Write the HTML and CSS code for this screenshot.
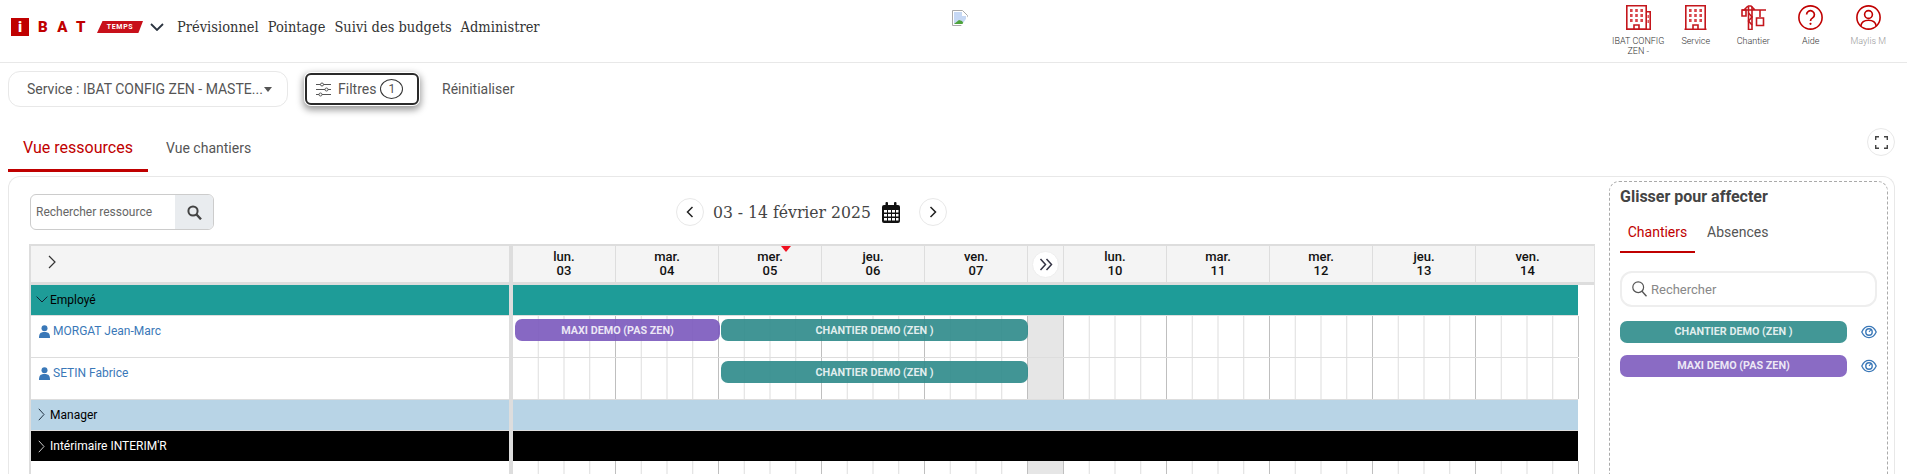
FILE: index.html
```html
<!DOCTYPE html>
<html lang="fr">
<head>
<meta charset="utf-8">
<title>IBAT Temps</title>
<link rel="stylesheet" href="styles.css">
</head>
<body>
<header class="topbar">
  <div class="brand">
    <span class="brand-i">i</span>
    <span class="brand-name">BAT</span>
    <span class="brand-temps">TEMPS</span>
    <svg class="brand-chev" viewBox="0 0 14 8"><path d="M1 1l6 6 6-6" fill="none" stroke="#2b3440" stroke-width="1.8"/></svg>
  </div>
  <nav class="mainnav">
    <a>Prévisionnel</a><a>Pointage</a><a>Suivi des budgets</a><a>Administrer</a>
  </nav>
  <div class="broken">
    <svg width="16" height="16" viewBox="0 0 16 16">
      <path d="M.5.5h10l5 5v10H.5z" fill="#fff" stroke="#a9a9a9"/>
      <path d="M2 2h8v4h4v8H2z" fill="#c6d8f4"/>
      <path d="M2 14l5-4 3 1 2 3z" fill="#4ea33c"/>
      <path d="M16 6L9 16h7z" fill="#fff"/>
    </svg>
  </div>
  <div class="tools">
    <div class="tool">
      <svg class="tool-ico" viewBox="0 0 25 25"><g fill="none" stroke="#c4161c" stroke-width="1.6"><path d="M.8 24.2V.8h19.4v23.4z"/><path d="M20.2 6.8h4v17.4h-4M.5 24.2h24"/><path d="M8 24v-4h5v4"/></g><g fill="#d9464b"><rect x="4" y="4" width="2.6" height="3"/><rect x="9.2" y="4" width="2.6" height="3"/><rect x="14.4" y="4" width="2.6" height="3"/><rect x="4" y="9" width="2.6" height="3"/><rect x="9.2" y="9" width="2.6" height="3"/><rect x="14.4" y="9" width="2.6" height="3"/><rect x="4" y="14" width="2.6" height="3"/><rect x="9.2" y="14" width="2.6" height="3"/><rect x="14.4" y="14" width="2.6" height="3"/><rect x="21.5" y="10" width="1.4" height="3"/><rect x="21.5" y="15" width="1.4" height="3"/></g></svg>
      <span>IBAT CONFIG ZEN -</span>
    </div>
    <div class="tool">
      <svg class="tool-ico" viewBox="0 0 25 25"><g fill="none" stroke="#c4161c" stroke-width="1.6"><path d="M2.8 24.2V.8h19.4v23.4zM1.5 24.2h22"/><path d="M10 24v-4h5v4"/></g><g fill="#d9464b"><rect x="6" y="4" width="2.6" height="3"/><rect x="11.2" y="4" width="2.6" height="3"/><rect x="16.4" y="4" width="2.6" height="3"/><rect x="6" y="9" width="2.6" height="3"/><rect x="11.2" y="9" width="2.6" height="3"/><rect x="16.4" y="9" width="2.6" height="3"/><rect x="6" y="14" width="2.6" height="3"/><rect x="11.2" y="14" width="2.6" height="3"/><rect x="16.4" y="14" width="2.6" height="3"/></g></svg>
      <span>Service</span>
    </div>
    <div class="tool">
      <svg class="tool-ico" viewBox="0 0 25 25"><g fill="none" stroke="#c4161c" stroke-width="1.6"><path d="M1 5h24M7 1l-4 4M7 1h3l4 4"/><path d="M1 5h4v6H1z"/><path d="M7.5 1.5V24.5h3.5V1.5"/><path d="M7.5 8l3.5 4-3.5 4 3.5 4"/><path d="M19 5v7"/><path d="M15.5 13h7v7.5h-7z"/></g></svg>
      <span>Chantier</span>
    </div>
    <div class="tool">
      <svg class="tool-ico" viewBox="0 0 25 25"><circle cx="12.5" cy="12.5" r="11.6" fill="none" stroke="#c00000" stroke-width="1.6"/><path d="M8.6 9.6a3.9 3.9 0 1 1 6 3.3c-1.4.9-2.1 1.5-2.1 3" fill="none" stroke="#c00000" stroke-width="1.7"/><circle cx="12.5" cy="18.8" r="1.1" fill="#c00000"/></svg>
      <span>Aide</span>
    </div>
    <div class="tool tool-user">
      <svg class="tool-ico" viewBox="0 0 25 25"><g fill="none" stroke="#c00000" stroke-width="1.6"><circle cx="12.5" cy="12.5" r="11.6"/><circle cx="12.5" cy="9.5" r="3.9"/><path d="M4.8 21c.7-3.8 3.6-5.7 7.7-5.7s7 1.9 7.7 5.7"/></g></svg>
      <span>Maylis M</span>
    </div>
  </div>
</header>

<section class="filterbar">
  <div class="select">
    <span class="select-text">Service : IBAT CONFIG ZEN - MASTE...</span>
    <span class="caret"></span>
  </div>
  <button class="filter-btn">
    <svg width="15" height="15" viewBox="0 0 15 15"><g fill="none" stroke="#555" stroke-width="1"><path d="M0 2.5h4.5M7.5 2.500h7.500M0 7.500h9M12 7.500h3M0 12.500h3M6 12.500h9"/><circle cx="6" cy="2.500" r="1.500"/><circle cx="10.500" cy="7.500" r="1.500"/><circle cx="4.500" cy="12.500" r="1.500"/></g></svg>
    <span>Filtres</span>
    <span class="filter-count">1</span>
  </button>
  <a class="reset">Réinitialiser</a>
</section>

<section class="viewtabs">
  <div class="tabs">
    <a class="tab tab-active">Vue ressources</a>
    <a class="tab">Vue chantiers</a>
  </div>
  <button class="fullscreen">
    <svg width="13" height="13" viewBox="0 0 13 13"><path d="M.7 4V.7H4M9 .7h3.300V4M12.300 9v3.300H9M4 12.300H.7V9" fill="none" stroke="#444" stroke-width="1.400"/></svg>
  </button>
</section>

<main class="card">
  <div class="planning">
    <div class="toolbar">
      <div class="search">
        <span class="search-input">Rechercher ressource</span>
        <span class="search-btn">
          <svg width="15" height="15" viewBox="0 0 15 15"><circle cx="6" cy="6" r="4.600" fill="none" stroke="#444" stroke-width="2"/><path d="M9.500 9.500l4.500 4.800" stroke="#444" stroke-width="2.400"/></svg>
        </span>
      </div>
      <div class="datenav">
        <button class="round"><svg width="8" height="12" viewBox="0 0 8 12"><path d="M6.500 1L1.500 6l5 5" fill="none" stroke="#222" stroke-width="1.500"/></svg></button>
        <span class="daterange">03 - 14 février 2025</span>
        <svg class="calendar" width="18" height="21" viewBox="0 0 18 21"><path d="M2 3h14a2 2 0 0 1 2 2v14a2 2 0 0 1-2 2H2a2 2 0 0 1-2-2V5a2 2 0 0 1 2-2z" fill="#111"/><rect x="3.500" y="0" width="2.500" height="5" rx="1" fill="#111"/><rect x="12" y="0" width="2.500" height="5" rx="1" fill="#111"/><g fill="#fff"><rect x="2" y="8" width="3" height="2.500"/><rect x="6" y="8" width="3" height="2.500"/><rect x="10" y="8" width="3" height="2.500"/><rect x="14" y="8" width="2.500" height="2.500"/><rect x="2" y="12" width="3" height="2.500"/><rect x="6" y="12" width="3" height="2.500"/><rect x="10" y="12" width="3" height="2.500"/><rect x="14" y="12" width="2.500" height="2.500"/><rect x="2" y="16" width="3" height="2.500"/><rect x="6" y="16" width="3" height="2.500"/><rect x="10" y="16" width="3" height="2.500"/><rect x="14" y="16" width="2.500" height="2.500"/></g></svg>
        <button class="round"><svg width="8" height="12" viewBox="0 0 8 12"><path d="M1.500 1l5 5-5 5" fill="none" stroke="#222" stroke-width="1.500"/></svg></button>
      </div>
      <div></div>
    </div>

    <div class="gantt">
      <div class="row row-head">
        <div class="label head-label"><svg width="8" height="14" viewBox="0 0 8 14"><path d="M1 1l6 6-6 6" fill="none" stroke="#333" stroke-width="1.200"/></svg></div>
        <div class="track head-track">
          <div class="day">lun.<br>03</div>
          <div class="day">mar.<br>04</div>
          <div class="day day-today">mer.<br>05</div>
          <div class="day">jeu.<br>06</div>
          <div class="day">ven.<br>07</div>
          <div class="day day-skip"><button class="skip"><svg width="14" height="13" viewBox="0 0 14 13"><path d="M1.500 1l5 5.500-5 5.500M7.500 1l5 5.500-5 5.500" fill="none" stroke="#334" stroke-width="1.500"/></svg></button></div>
          <div class="day">lun.<br>10</div>
          <div class="day">mar.<br>11</div>
          <div class="day">mer.<br>12</div>
          <div class="day">jeu.<br>13</div>
          <div class="day">ven.<br>14</div>
        </div>
      </div>

      <div class="row row-group group-teal">
        <div class="label"><svg class="chev-down" width="12" height="7" viewBox="0 0 12 7"><path d="M.6.600L6 6l5.400-5.400" fill="none" stroke="#123" stroke-width="1"/></svg><span>Employé</span></div>
        <div class="track-fill"></div>
      </div>

      <div class="row row-res">
        <div class="label res-label">
          <svg width="11" height="13" viewBox="0 0 11 13"><circle cx="5.500" cy="3.200" r="3" fill="#3a78b8"/><path d="M0 13c0-4 1-6 5.500-6S11 9 11 13z" fill="#3a78b8"/></svg>
          <span>MORGAT Jean-Marc</span>
        </div>
        <div class="track grid-track">
          <div class="week week-a"></div><div class="weekend"></div><div class="week week-b"></div>
          <div class="bar bar-purple bar-1">MAXI DEMO (PAS ZEN)</div>
          <div class="bar bar-teal bar-2">CHANTIER DEMO (ZEN )</div>
        </div>
      </div>

      <div class="row row-res">
        <div class="label res-label">
          <svg width="11" height="13" viewBox="0 0 11 13"><circle cx="5.500" cy="3.200" r="3" fill="#3a78b8"/><path d="M0 13c0-4 1-6 5.500-6S11 9 11 13z" fill="#3a78b8"/></svg>
          <span>SETIN Fabrice</span>
        </div>
        <div class="track grid-track">
          <div class="week week-a"></div><div class="weekend"></div><div class="week week-b"></div>
          <div class="bar bar-teal bar-2">CHANTIER DEMO (ZEN )</div>
        </div>
      </div>

      <div class="row row-group group-blue">
        <div class="label"><svg class="chev-right" width="7" height="13" viewBox="0 0 7 13"><path d="M.8.800L6 6.500.8 12.200" fill="none" stroke="#234" stroke-width="1"/></svg><span>Manager</span></div>
        <div class="track-fill"></div>
      </div>

      <div class="row row-group group-black">
        <div class="label"><svg class="chev-right" width="7" height="13" viewBox="0 0 7 13"><path d="M.8.800L6 6.500.8 12.200" fill="none" stroke="#ccc" stroke-width="1"/></svg><span>Intérimaire INTERIM'R</span></div>
        <div class="track-fill"></div>
      </div>

      <div class="row row-blank">
        <div class="label"></div>
        <div class="track grid-track">
          <div class="week week-a"></div><div class="weekend"></div><div class="week week-b"></div>
        </div>
      </div>
    </div>
  </div>

  <aside class="side">
    <h2 class="side-title">Glisser pour affecter</h2>
    <div class="side-tabs">
      <a class="side-tab side-tab-active">Chantiers</a>
      <a class="side-tab">Absences</a>
    </div>
    <div class="side-search">
      <svg width="15" height="16" viewBox="0 0 15 16"><circle cx="6.200" cy="6.200" r="5.400" fill="none" stroke="#555" stroke-width="1.200"/><path d="M10 10.300l4.500 5" stroke="#555" stroke-width="1.400"/></svg>
      <span>Rechercher</span>
    </div>
    <div class="chip-row">
      <div class="chip bar-teal">CHANTIER DEMO (ZEN )</div>
      <svg class="eye" viewBox="0 0 16 14"><path d="M.8 7C2.500 3.200 5 1.400 8 1.400S13.500 3.200 15.200 7C13.500 10.800 11 12.600 8 12.600S2.500 10.800.8 7z" fill="none" stroke="#3a78b8" stroke-width="1.300"/><circle cx="8" cy="7" r="3.200" fill="none" stroke="#3a78b8" stroke-width="1.400"/><path d="M8 7l2-2.500" stroke="#3a78b8" stroke-width="1.200"/></svg>
    </div>
    <div class="chip-row">
      <div class="chip bar-purple">MAXI DEMO (PAS ZEN)</div>
      <svg class="eye" viewBox="0 0 16 14"><path d="M.8 7C2.500 3.200 5 1.400 8 1.400S13.500 3.200 15.200 7C13.500 10.800 11 12.600 8 12.600S2.500 10.800.8 7z" fill="none" stroke="#3a78b8" stroke-width="1.300"/><circle cx="8" cy="7" r="3.200" fill="none" stroke="#3a78b8" stroke-width="1.400"/><path d="M8 7l2-2.500" stroke="#3a78b8" stroke-width="1.200"/></svg>
    </div>
  </aside>
</main>
</body>
</html>
```
FILE: styles.css
```css
* { box-sizing: border-box; }
html, body {
  margin: 0;
  height: 474px;
  overflow: hidden;
  background: #fff;
  font-family: Roboto, "Liberation Sans", sans-serif;
  color: #555;
}
button {
  font: inherit;
  color: inherit;
  background: #fff;
  padding: 0;
}

/* top bar */
.topbar {
  height: 63px;
  border-bottom: 1px solid #e8e8e8;
  display: flex;
  align-items: flex-start;
  position: relative;
}
.brand {
  display: flex;
  align-items: center;
  height: 18px;
  margin: 18px 0 0 11px;
}
.brand-i {
  width: 18px;
  height: 18px;
  background: #c00000;
  color: #fff;
  font: 900 15px/18px Roboto, sans-serif;
  text-align: center;
}
.brand-name {
  margin-left: 9px;
  color: #c00000;
  font: 900 15px/18px Roboto, sans-serif;
  letter-spacing: 9.5px;
  width: 59px;
}
.brand-temps {
  width: 46px;
  height: 12px;
  background: #c8101a;
  color: #fff;
  font: 700 7px/12px Roboto, sans-serif;
  letter-spacing: .7px;
  text-align: center;
  clip-path: polygon(12% 0, 100% 0, 90% 100%, 0 100%);
}
.brand-chev {
  width: 14px;
  height: 8px;
  margin-left: 7px;
}
.mainnav {
  display: flex;
  gap: 9px;
  margin: 18px 0 0 13px;
  font: 14.500px/18px "DejaVu Serif Condensed", "DejaVu Serif", serif;
  color: #333;
  white-space: nowrap;
}
.broken {
  position: absolute;
  left: 952px;
  top: 10px;
  height: 16px;
}
.tools {
  margin-left: auto;
  padding: 5px 10px 0 0;
  display: flex;
}
.tool {
  width: 57.500px;
  display: flex;
  flex-direction: column;
  align-items: center;
  font-size: 9px;
  font-weight: 300;
  line-height: 9.500px;
  color: #333;
  text-align: center;
}
.tool span { display: block; width: 54px; margin-top: 7px; }
.tool-ico { width: 25px; height: 25px; display: block; }
.tool-user { color: #999; }

/* filters */
.filterbar {
  display: flex;
  align-items: center;
  padding: 8px 0 0 8px;
}
.select {
  width: 280px;
  height: 36px;
  border: 1px solid #e8e8e8;
  border-radius: 12px;
  padding: 0 15px 0 18px;
  display: flex;
  align-items: center;
  justify-content: space-between;
  font-size: 14px;
  color: #555;
}
.caret {
  width: 0;
  height: 0;
  border-left: 4.500px solid transparent;
  border-right: 4.500px solid transparent;
  border-top: 5px solid #555;
}
.filter-btn {
  width: 114px;
  height: 32px;
  margin-left: 17px;
  border: 2px solid #2a2a2a;
  border-radius: 6px;
  display: flex;
  align-items: center;
  padding-left: 9px;
  font-size: 14px;
  color: #555;
  box-shadow: 0 0 0 1px #fff, 0 3px 7px 2px rgba(0,0,0,.4);
}
.filter-btn svg { margin-right: 7px; }
.filter-count {
  width: 23px;
  height: 20px;
  margin-left: 4px;
  border: 1px solid #333;
  border-radius: 50%;
  font-size: 12px;
  line-height: 18px;
  text-align: center;
}
.reset { margin-left: 23px; font-size: 14px; color: #555; }

/* view tabs */
.viewtabs {
  display: flex;
  justify-content: space-between;
  padding: 17px 12px 0 8px;
  height: 65px;
}
.tabs { display: flex; align-items: flex-start; }
.tab {
  height: 48px;
  border-bottom: 3px solid transparent;
  display: flex;
  align-items: center;
  justify-content: center;
  font-size: 14px;
  color: #555;
  padding: 2px 0 0 18px;
}
.tab-active {
  width: 140px;
  padding: 2px 0 0;
  font-size: 16px;
  color: #c00000;
  border-bottom-color: #c00000;
}
.fullscreen {
  width: 28px;
  height: 28px;
  margin-top: 4px;
  border: 1px solid #e8e8e8;
  border-radius: 50%;
  display: flex;
  align-items: center;
  justify-content: center;
}

/* card */
.card {
  margin: 4px 12px 0 8px;
  height: 298px;
  overflow: hidden;
  border: 1px solid #e8e8e8;
  border-bottom: 0;
  border-radius: 12px 12px 0 0;
  padding: 4px 6px 0 20px;
  display: flex;
  gap: 14px;
}
.planning { width: 1566px; flex: none; padding-top: 13px; }
.toolbar {
  height: 36px;
  margin-bottom: 14px;
  display: grid;
  grid-template-columns: 1fr auto 1fr;
  align-items: center;
}
.search {
  width: 184px;
  height: 36px;
  margin-left: 1px;
  border: 1px solid #ccc;
  border-radius: 6px;
  overflow: hidden;
  display: flex;
}
.search-input {
  width: 144px;
  padding-left: 5px;
  font-size: 12px;
  line-height: 34px;
  color: #666;
}
.search-btn {
  flex: 1;
  background: #e9ecef;
  display: flex;
  align-items: center;
  justify-content: center;
}
.datenav { display: flex; align-items: center; margin-left: -1px; }
.round {
  width: 28px;
  height: 28px;
  border: 1px solid #e8e8e8;
  border-radius: 50%;
  display: flex;
  align-items: center;
  justify-content: center;
}
.daterange {
  margin-left: 9px;
  width: 158px;
  font: 17.400px/24px "DejaVu Serif Condensed", "DejaVu Serif", serif;
  color: #444;
  white-space: nowrap;
}
.calendar { margin: 0 19px 0 11px; }

/* gantt */
.gantt {
  height: 230px;
  overflow: hidden;
  border-top: 2px solid #ddd;
  border-left: 2px solid #ddd;
  border-right: 1px solid #e2e2e2;
}
.row { display: flex; }
.label {
  width: 482px;
  flex: none;
  border-right: 4px solid #ddd;
  font-size: 12px;
}
.track {
  display: grid;
  grid-template-columns: repeat(5, 103px) 36px repeat(5, 103px);
}
.row-head { height: 39px; border-bottom: 3px solid #ddd; background: #f4f4f4; }
.head-label { display: flex; align-items: center; padding: 0 0 4px 17px; }
.head-track { flex: 1; }
.day {
  position: relative;
  border-right: 1px solid #ddd;
  padding-top: 4px;
  font-size: 13px;
  font-weight: 500;
  line-height: 14px;
  color: #111;
  text-align: center;
}
.day:last-child { border-right: 0; }
.day-today::before {
  content: "";
  position: absolute;
  top: 0;
  left: 62px;
  border-left: 5px solid transparent;
  border-right: 5px solid transparent;
  border-top: 6px solid #f01020;
}
.day-skip { display: flex; align-items: center; justify-content: center; padding: 0; }
.skip {
  width: 27px;
  height: 27px;
  border: 1px solid #eee;
  border-radius: 50%;
  display: flex;
  align-items: center;
  justify-content: center;
}

.row-group { width: 1547px; height: 31px; border-bottom: 1px solid #ddd; }
.row-group .label {
  display: flex;
  align-items: center;
  gap: 2px;
  padding: 0 0 1px 5px;
}
.track-fill { flex: 1; }
.chev-right { margin: 0 3px 0 2px; }
.group-teal .label, .group-teal .track-fill { background: #1e9c98; }
.group-teal .label, .group-blue .label { color: #000; }
.group-blue .label, .group-blue .track-fill { background: #b8d4e6; }
.group-black { height: 30px; border-bottom: 0; }
.group-black .label, .group-black .track-fill { background: #000; }
.group-black .label { color: #fff; padding-bottom: 0; }

.row-res { width: 1547px; height: 42px; border-bottom: 1px solid #ddd; }
.res-label {
  display: flex;
  align-items: flex-start;
  gap: 3px;
  padding: 8px 0 0 8px;
  line-height: 14px;
  color: #3a78b8;
}
.res-label svg { margin-top: 1px; }
.week, .weekend { grid-row: 1; }
.week {
  background-image:
    linear-gradient(to right, #bfbfbf 1px, transparent 1px),
    linear-gradient(to right, #ddd 1px, transparent 1px);
  background-size: 103px 100%, 25.750px 100%;
  background-position: -1px 0, -1px 0;
}
.week-a { grid-column: 1 / 6; }
.weekend { grid-column: 6; background: #e6e6e6; border-right: 1px solid #bfbfbf; }
.week-b { grid-column: 7 / 12; }
.row-blank { height: 60px; }

.bar, .chip {
  height: 22px;
  border-radius: 7px;
  color: rgba(255,255,255,.85);
  font-size: 10.800px;
  font-weight: 700;
  line-height: 24px;
  text-align: center;
  white-space: nowrap;
}
.bar { grid-row: 1; align-self: start; margin-top: 3px; }
.bar-purple { background: rgba(122,88,188,.9); }
.bar-teal { background: rgba(44,137,137,.9); }
.bar-1 { grid-column: 1 / 3; margin: 3px -1px 0 2px; }
.bar-2 { grid-column: 3 / 6; margin: 3px 0 0 2px; }

/* side panel */
.side {
  width: 279px;
  height: 400px;
  flex: none;
  border: 1px dashed #aaa;
  border-radius: 10px;
  padding: 0 10px;
}
.side-title {
  margin: 4px 0 0;
  font-size: 16px;
  font-weight: 700;
  line-height: 22px;
  color: #444;
}
.side-tabs { display: flex; margin-top: 8px; }
.side-tab {
  height: 37px;
  font-size: 14px;
  line-height: 32px;
  color: #555;
  padding: 0 0 0 12px;
}
.side-tab-active {
  width: 75px;
  padding: 0;
  text-align: center;
  color: #c00000;
  border-bottom: 2px solid #c00000;
}
.side-search {
  width: 257px;
  height: 36px;
  margin-top: 18px;
  border: 2px solid #eee;
  border-radius: 12px;
  display: flex;
  align-items: center;
  gap: 4px;
  padding-left: 10px;
  font-size: 13px;
  color: #888;
}
.chip-row { display: flex; align-items: center; height: 22px; margin-top: 12px; }
.side-search + .chip-row { margin-top: 14px; }
.chip { width: 227px; line-height: 22px; }
.chip.bar-purple { background: #8a6bc4; }
.chip.bar-teal { background: #429796; }
.eye { width: 16px; height: 14px; margin-left: 14px; }
```
